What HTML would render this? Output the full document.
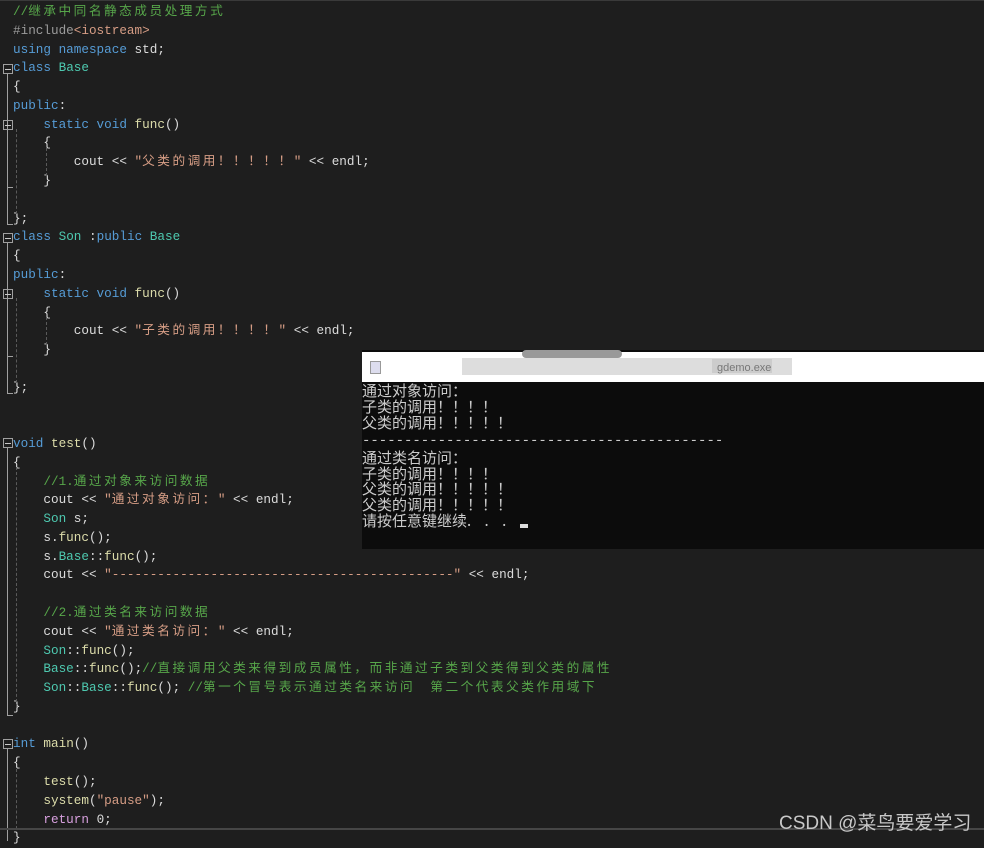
<!DOCTYPE html>
<html><head><meta charset="utf-8">
<style>
html,body{margin:0;padding:0;}
body{width:984px;height:841px;background:#1e1e1e;position:relative;overflow:hidden;}
pre{position:absolute;left:13px;top:3px;margin:0;font-family:"Liberation Mono","Noto Sans CJK SC",monospace;font-size:12.67px;line-height:18.78px;color:#dcdcdc;}
.z{letter-spacing:2.5px;font-family:"Liberation Mono","Noto Sans CJK SC",monospace;}
.cm{color:#57a64a}.kw{color:#569cd6}.ty{color:#4ec9b0}.st{color:#d69d85}.fn{color:#dcdcaa}.pp{color:#9b9b9b}.rt{color:#d8a0df}.br{color:#d7ba7d}
.fold{position:absolute;left:3px;width:8px;height:8px;border:1px solid #a0a0a0;}
.fold:after{content:"";position:absolute;left:1px;right:1px;top:3.5px;height:1px;background:#c8c8c8;}
.vl{position:absolute;left:7px;width:1px;background:#a0a0a0;}
.hl{position:absolute;left:7px;width:6px;height:1px;background:#a0a0a0;}
.dl{position:absolute;width:0;border-left:1px dashed #5a5a5a;}
.con{position:absolute;left:362px;top:350px;width:622px;height:199px;background:#0c0c0c;}
.tb{position:absolute;left:0;top:2px;width:622px;height:30px;background:#fff;}
.ct{position:absolute;left:0;top:33px;font-family:"Noto Sans CJK SC","WenQuanYi Zen Hei",sans-serif;font-size:15px;line-height:15.9px;color:#cccccc;white-space:pre;}
</style></head><body>
<div style="position:absolute;left:0;top:0;width:984px;height:1px;background:#3a3a3a"></div>
<pre><span class="cm">//<span class="z">继承中同名静态成员处理方式</span></span>
<span class="pp">#include</span><span class="st">&lt;iostream&gt;</span>
<span class="kw">using namespace</span> std;
<span class="kw">class</span> <span class="ty">Base</span>
{
<span class="kw">public</span>:
    <span class="kw">static void</span> <span class="fn">func</span>()
    {
        cout &lt;&lt; <span class="st">"<span class="z">父类的调用！！！！！</span>"</span> &lt;&lt; endl;
    }

};
<span class="kw">class</span> <span class="ty">Son</span> :<span class="kw">public</span> <span class="ty">Base</span>
{
<span class="kw">public</span>:
    <span class="kw">static void</span> <span class="fn">func</span>()
    {
        cout &lt;&lt; <span class="st">"<span class="z">子类的调用！！！！</span>"</span> &lt;&lt; endl;
    }

};


<span class="kw">void</span> <span class="fn">test</span>()
{
    <span class="cm">//1.<span class="z">通过对象来访问数据</span></span>
    cout &lt;&lt; <span class="st">"<span class="z">通过对象访问：</span>"</span> &lt;&lt; endl;
    <span class="ty">Son</span> s;
    s.<span class="fn">func</span>();
    s.<span class="ty">Base</span>::<span class="fn">func</span>();
    cout &lt;&lt; <span class="st">"---------------------------------------------"</span> &lt;&lt; endl;

    <span class="cm">//2.<span class="z">通过类名来访问数据</span></span>
    cout &lt;&lt; <span class="st">"<span class="z">通过类名访问：</span>"</span> &lt;&lt; endl;
    <span class="ty">Son</span>::<span class="fn">func</span>();
    <span class="ty">Base</span>::<span class="fn">func</span>();<span class="cm">//<span class="z">直接调用父类来得到成员属性，而非通过子类到父类得到父类的属性</span></span>
    <span class="ty">Son</span>::<span class="ty">Base</span>::<span class="fn">func</span>(); <span class="cm">//<span class="z">第一个冒号表示通过类名来访问　第二个代表父类作用域下</span></span>
}

<span class="kw">int</span> <span class="fn">main</span>()
{
    <span class="fn">test</span>();
    <span class="fn">system</span>(<span class="st">"pause"</span>);
    <span class="rt">return</span> 0;
}</pre>
<div class="fold" style="top:64px"></div>
<div class="vl" style="top:74px;height:150px"></div><div class="hl" style="top:224px"></div>
<div class="fold" style="top:120px"></div>
<div class="hl" style="top:187px"></div>
<div class="fold" style="top:233px"></div>
<div class="vl" style="top:243px;height:150px"></div><div class="hl" style="top:393px"></div>
<div class="fold" style="top:289px"></div>
<div class="hl" style="top:356px"></div>
<div class="fold" style="top:438px"></div>
<div class="vl" style="top:448px;height:267px"></div><div class="hl" style="top:715px"></div>
<div class="fold" style="top:739px"></div>
<div class="vl" style="top:749px;height:92px"></div>
<div class="dl" style="left:16px;top:129px;height:85px"></div>
<div class="dl" style="left:46px;top:148px;height:28px"></div>
<div class="dl" style="left:16px;top:298px;height:85px"></div>
<div class="dl" style="left:46px;top:317px;height:28px"></div>
<div class="dl" style="left:16px;top:467px;height:240px"></div>
<div class="dl" style="left:16px;top:769px;height:60px"></div>
<div style="position:absolute;left:0;top:828px;width:984px;height:2px;background:#464646"></div>
<div class="con">
<div class="tb">
<div style="position:absolute;left:8px;top:9px;width:9px;height:11px;border:1px solid #999;background:#dde"></div>
<div style="position:absolute;left:100px;top:6px;width:330px;height:17px;background:#d4d4d4;opacity:.8"></div>
<div style="position:absolute;left:160px;top:-2px;width:100px;height:8px;background:#999;border-radius:4px"></div>
<div style="position:absolute;left:350px;top:7px;width:60px;height:14px;background:#ccc"></div>
<div style="position:absolute;left:355px;top:10px;font:11px 'Liberation Sans',sans-serif;color:#777">gdemo.exe</div>
</div>
<div class="ct">通过对象访问：
子类的调用！！！！
父类的调用！！！！！
<span style="font-family:'Liberation Mono',monospace;font-size:14px">-------------------------------------------</span>
通过类名访问：
子类的调用！！！！
父类的调用！！！！！
父类的调用！！！！！
请按任意键继续<span style="letter-spacing:5px">. . . </span><span style="display:inline-block;width:8px;height:4px;background:#ddd;vertical-align:-2px"></span></div>
</div>
<div style="position:absolute;left:779px;top:808px;font:19px 'Liberation Sans','Noto Sans CJK SC',sans-serif;color:#c8c8c8">CSDN @菜鸟要爱学习</div>
</body></html>
